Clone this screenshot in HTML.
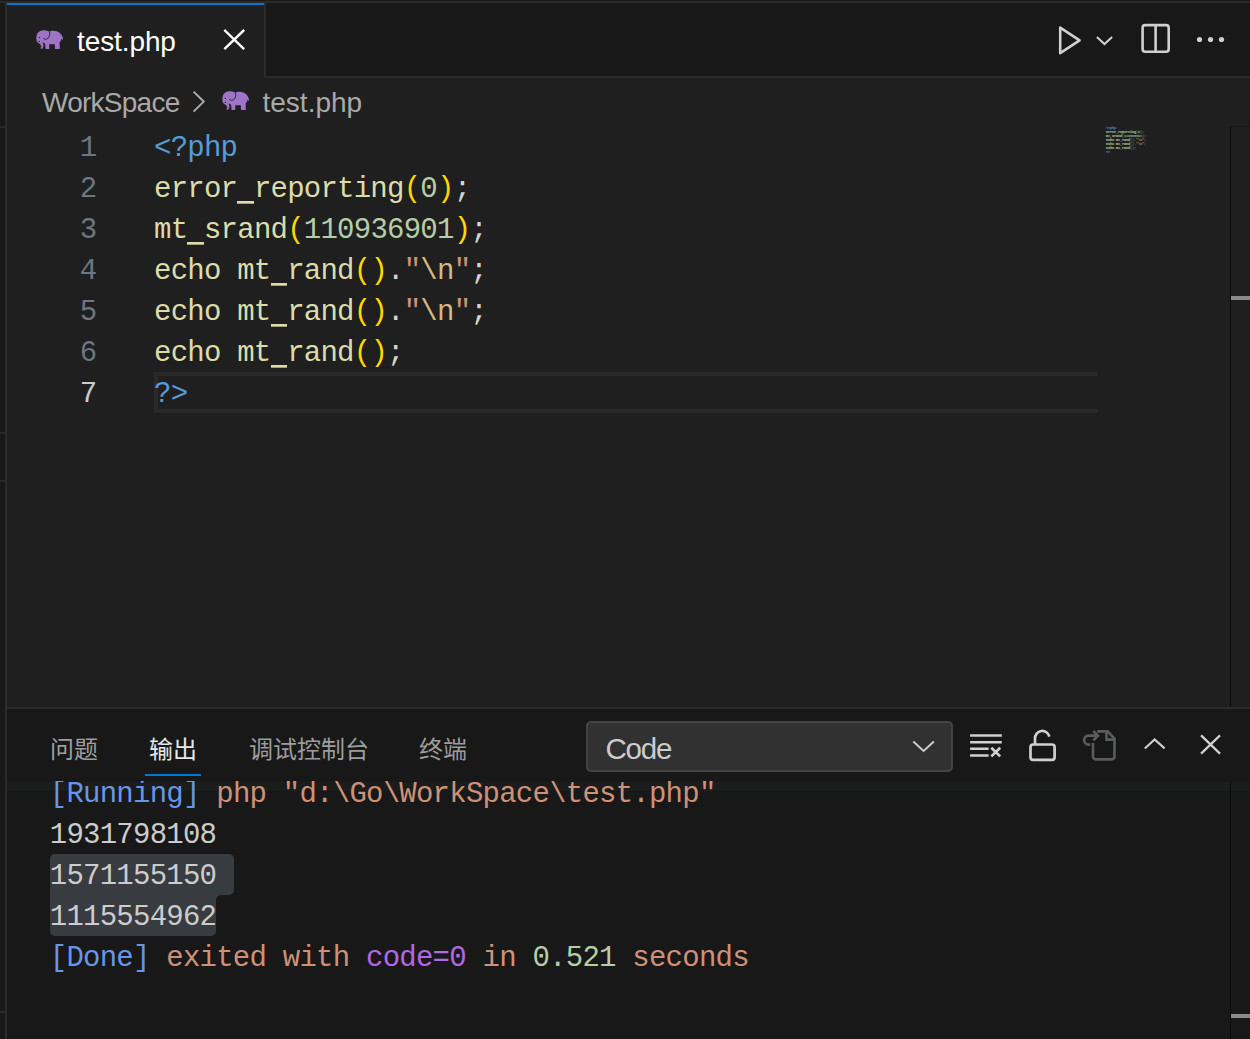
<!DOCTYPE html>
<html>
<head>
<meta charset="utf-8">
<title>test.php</title>
<style>
*{box-sizing:border-box;margin:0;padding:0}
html,body{width:1250px;height:1039px;overflow:hidden;background:#1f1f1f}
body{position:relative;font-family:"Liberation Sans",sans-serif;color:#ccc}
.abs{position:absolute}
.ln{background:#2b2b2b;position:absolute}
.cjk{position:absolute;overflow:visible}
.cjk text{font-family:"Liberation Sans","Noto Sans CJK SC",sans-serif;font-size:24px}
svg{display:block}
/* chrome */
#topdark{left:0;top:0;width:1250px;height:1px;background:#181a1a}
#topline{left:0;top:1px;width:1250px;height:2px}
#leftstrip{left:0;top:3px;width:5px;height:1036px;background:#181818}
#leftborder{left:5px;top:3px;width:2px;height:1036px}
#tabbar{left:7px;top:3px;width:1243px;height:73px;background:#181818}
#tabbarline{left:7px;top:76px;width:1243px;height:2px}
#tab{left:7px;top:3px;width:257px;height:75px;background:#1f1f1f}
#tabblue{left:7px;top:3px;width:257px;height:2px;background:#0078d4}
#tabright{left:264px;top:3px;width:2px;height:73px}
.ui{position:absolute;white-space:nowrap;font-family:"Liberation Sans",sans-serif}
#tabtitle{left:77px;top:24px;font-size:28px;line-height:36px;color:#fff;letter-spacing:-0.1px}
#bc1{left:42px;top:85px;font-size:28px;line-height:36px;color:#a9a9a9;letter-spacing:-0.75px}
#bc2{left:262.5px;top:85px;font-size:28px;line-height:36px;color:#a9a9a9;letter-spacing:0}
/* editor */
.mono{font-family:"Liberation Mono",monospace;font-size:29px;letter-spacing:-0.76px;line-height:41px;margin-top:2px;white-space:pre;position:absolute}
.num{left:40px;width:56.5px;text-align:right;color:#6e7681}
.code{left:154px;color:#d4d4d4}
.mc{left:0;color:#777;font-weight:bold;margin-top:0;-webkit-text-stroke:1.6px currentColor}
.mc .p{color:#6a6a5a}.mc .s{color:#c89858}.mc .q{color:#c08050}.mc .f{color:#e0e0ae}.mc .n{color:#a8d0a0}.mc .b{color:#5a9fe0}
.us{font-style:normal;color:transparent;background:linear-gradient(#dcdcaa,#dcdcaa) no-repeat 0 28px/100% 2.7px}
.b{color:#569cd6}.f{color:#dcdcaa}.p{color:#ffd700}.n{color:#b5cea8}.s{color:#d7ba7d}.q{color:#ce9178}
#curline{left:154px;top:372px;width:944px;height:41px;border:4px solid #292929;border-right:0}
/* panel */
#panelbg{left:7px;top:709px;width:1243px;height:330px;background:#181818}
#panelline{left:7px;top:707px;width:1243px;height:2px}
#tabul{left:145px;top:774px;width:56px;height:2px;background:#0078d4}
#dd{left:586px;top:721px;width:367px;height:51px;background:#313131;border:2px solid #444;border-radius:5px}
#ddtext{left:605.5px;top:731px;font-size:29.5px;line-height:36px;color:#ccc;letter-spacing:-1.2px}
#out{left:7px;top:781px;width:1223px;height:258px;overflow:hidden}
.o{left:42.8px;color:#ccc}
.ob{color:#6796e6}.oo{color:#ce9178}.op{color:#b267e6}.og{color:#b5cea8}
.sel{position:absolute;background:#383b40}
</style>
</head>
<body>
<div id="topdark" class="abs"></div>
<div id="topline" class="ln"></div>
<div id="leftstrip" class="abs"></div>
<div id="leftborder" class="ln"></div>
<div class="ln" style="left:0;top:126px;width:5px;height:2px"></div>
<div class="ln" style="left:0;top:432px;width:5px;height:2px"></div>
<div class="ln" style="left:0;top:480px;width:5px;height:2px"></div>
<div class="ln" style="left:0;top:1011px;width:5px;height:2px"></div>

<div id="tabbar" class="abs"></div>
<div id="tabbarline" class="ln"></div>
<div id="tab" class="abs"></div>
<div id="tabblue" class="abs"></div>
<div id="tabright" class="ln"></div>
<div id="tabtitle" class="ui">test.php</div>
<div id="bc1" class="ui">WorkSpace</div>
<div id="bc2" class="ui">test.php</div>

<svg class="abs" style="left:30px;top:20px" width="40" height="40" viewBox="0 0 40 40"><g fill="#a074c4"><path d="M19.3,11.6 C21,10.6 25,10.5 27.5,11.5 C30.5,12.8 32.5,15.5 33.1,18.8 L32.7,20.1 L31.6,18.6 C31.3,20.5 30.3,21.8 29.6,22.4 L29.8,28.9 L25,28.9 L24.8,24.2 L19.3,24.2 L19.2,28.9 L15.5,28.9 L15.2,24 C14.5,23 13.5,22.6 12.2,22.4 C13.3,23.5 13.8,25 13.4,26.6 C13,28 12,28.9 11.3,28.9 L10.2,27.8 C11.2,27.4 11.6,26.6 11.4,25.8 L10.6,26 C10.9,25 10.5,24.4 9.6,23.8 C8.2,23 7.2,22.4 6.8,21.6 C6,19.5 6.2,15.5 7.5,13.3 C9,10.8 12,9.9 14.5,10.2 C16.5,10.4 18.3,10.9 19.3,11.6 Z"/></g><path d="M19.3,11.4 C20.3,14 19.7,16.8 17.9,18.4 C16.4,19.6 14.4,19.5 13.3,18.3" fill="none" stroke="#1f1f1f" stroke-width="0.9"/><circle cx="9.4" cy="17.4" r="0.65" fill="#1f1f1f"/><path d="M8.2,21.7 L9.9,20.4 L9.9,21.9 Z" fill="#1f1f1f"/></svg>
<svg class="abs" style="left:216.1px;top:81px" width="40" height="40" viewBox="0 0 40 40"><g fill="#a074c4"><path d="M19.3,11.6 C21,10.6 25,10.5 27.5,11.5 C30.5,12.8 32.5,15.5 33.1,18.8 L32.7,20.1 L31.6,18.6 C31.3,20.5 30.3,21.8 29.6,22.4 L29.8,28.9 L25,28.9 L24.8,24.2 L19.3,24.2 L19.2,28.9 L15.5,28.9 L15.2,24 C14.5,23 13.5,22.6 12.2,22.4 C13.3,23.5 13.8,25 13.4,26.6 C13,28 12,28.9 11.3,28.9 L10.2,27.8 C11.2,27.4 11.6,26.6 11.4,25.8 L10.6,26 C10.9,25 10.5,24.4 9.6,23.8 C8.2,23 7.2,22.4 6.8,21.6 C6,19.5 6.2,15.5 7.5,13.3 C9,10.8 12,9.9 14.5,10.2 C16.5,10.4 18.3,10.9 19.3,11.6 Z"/></g><path d="M19.3,11.4 C20.3,14 19.7,16.8 17.9,18.4 C16.4,19.6 14.4,19.5 13.3,18.3" fill="none" stroke="#1f1f1f" stroke-width="0.9"/><circle cx="9.4" cy="17.4" r="0.65" fill="#1f1f1f"/><path d="M8.2,21.7 L9.9,20.4 L9.9,21.9 Z" fill="#1f1f1f"/></svg>
<svg class="abs" style="left:0;top:0" width="1250" height="130" viewBox="0 0 1250 130" fill="none">
<g stroke="#fff" stroke-width="2.4" stroke-linecap="square"><path d="M225.2,30.8 L243.3,48.3 M243.3,30.8 L225.2,48.3"/></g>
<path d="M193.6,91.6 L203.7,101.6 L193.6,111.6" stroke="#a9a9a9" stroke-width="2"/>
<g stroke="#d0d0d0">
<path d="M1060.2,27.6 L1079.6,40.4 L1060.2,53.2 Z" stroke-width="2.6" stroke-linejoin="round"/>
<path d="M1096.9,36.9 L1104.5,44.1 L1112.1,36.9" stroke-width="2"/>
<rect x="1142.6" y="25.1" width="26.1" height="26.6" rx="2.6" stroke-width="2.6"/>
<path d="M1155.6,25 V52" stroke-width="2.6"/>
</g>
<g fill="#d0d0d0"><circle cx="1199.5" cy="39.5" r="2.6"/><circle cx="1210.5" cy="39.5" r="2.6"/><circle cx="1221.5" cy="39.5" r="2.6"/></g>
</svg>


<!-- editor -->
<div class="mono num" style="top:126px">1</div>
<div class="mono num" style="top:167px">2</div>
<div class="mono num" style="top:208px">3</div>
<div class="mono num" style="top:249px">4</div>
<div class="mono num" style="top:290px">5</div>
<div class="mono num" style="top:331px">6</div>
<div class="mono num" style="top:372px;color:#ccc">7</div>
<div id="curline" class="abs"></div>
<div class="mono code" style="top:126px"><span class="b">&lt;?php</span></div>
<div class="mono code" style="top:167px"><span class="f">error<i class="us">_</i>reporting</span><span class="p">(</span><span class="n">0</span><span class="p">)</span>;</div>
<div class="mono code" style="top:208px"><span class="f">mt<i class="us">_</i>srand</span><span class="p">(</span><span class="n">110936901</span><span class="p">)</span>;</div>
<div class="mono code" style="top:249px"><span class="f">echo mt<i class="us">_</i>rand</span><span class="p">()</span>.<span class="q">"</span><span class="s">\n</span><span class="q">"</span>;</div>
<div class="mono code" style="top:290px"><span class="f">echo mt<i class="us">_</i>rand</span><span class="p">()</span>.<span class="q">"</span><span class="s">\n</span><span class="q">"</span>;</div>
<div class="mono code" style="top:331px"><span class="f">echo mt<i class="us">_</i>rand</span><span class="p">()</span>;</div>
<div class="mono code" style="top:372px"><span class="b">?&gt;</span></div>
<div id="mm" class="abs" style="left:1105.6px;top:126px;width:400px;height:287px;transform-origin:0 0;transform:scale(0.1204,0.0976);opacity:.66">
<div class="mono mc" style="top:0"><span class="b">&lt;?php</span></div>
<div class="mono mc" style="top:41px"><span class="f">error<i class="us">_</i>reporting</span><span class="p">(</span><span class="n">0</span><span class="p">)</span>;</div>
<div class="mono mc" style="top:82px"><span class="f">mt<i class="us">_</i>srand</span><span class="p">(</span><span class="n">110936901</span><span class="p">)</span>;</div>
<div class="mono mc" style="top:123px"><span class="f">echo mt<i class="us">_</i>rand</span><span class="p">()</span>.<span class="q">"</span><span class="s">\n</span><span class="q">"</span>;</div>
<div class="mono mc" style="top:164px"><span class="f">echo mt<i class="us">_</i>rand</span><span class="p">()</span>.<span class="q">"</span><span class="s">\n</span><span class="q">"</span>;</div>
<div class="mono mc" style="top:205px"><span class="f">echo mt<i class="us">_</i>rand</span><span class="p">()</span>;</div>
<div class="mono mc" style="top:246px"><span class="b">?&gt;</span></div>
</div>

<!-- panel -->
<div id="panelbg" class="abs"></div>
<div id="panelline" class="ln"></div>
<svg class="cjk" style="left:49.5px;top:735.6px" width="48" height="30.24"><text x="0" y="22.2" fill="#9d9d9d">问题</text></svg>
<svg class="cjk" style="left:149px;top:735.6px" width="48" height="30.24"><text x="0" y="22.2" fill="#e7e7e7">输出</text></svg>
<svg class="cjk" style="left:248.5px;top:735.6px" width="120" height="30.24"><text x="0" y="22.2" fill="#9d9d9d">调试控制台</text></svg>
<svg class="cjk" style="left:418.5px;top:735.6px" width="48" height="30.24"><text x="0" y="22.2" fill="#9d9d9d">终端</text></svg>
<div id="tabul" class="abs"></div>
<div id="dd" class="abs"></div>
<div id="ddtext" class="ui">Code</div>

<svg class="abs" style="left:0;top:709px" width="1250" height="73" viewBox="0 709 1250 73" fill="none">
<path d="M913.3,741.6 L923.6,751 L933.9,741.6" stroke="#ccc" stroke-width="2"/>
<g stroke="#d0d0d0" stroke-width="2.5">
<path d="M970.1,735.6 H1001.8 M970.1,742.2 H1001.8 M970.1,748.8 H988.6 M970.1,755.4 H988.6"/>
<path d="M991.3,747.8 L1000.2,756.4 M1000.2,747.8 L991.3,756.4" stroke-width="2.7"/>
</g>
<g stroke="#d0d0d0" stroke-width="2.7">
<rect x="1030.5" y="744.5" width="24.1" height="15.3" rx="2.6"/>
<path d="M1035,744 V738.6 A7.3,7.3 0 0 1 1049.4,736.6"/>
</g>
<g stroke="#5a5d5e" stroke-width="2.6">
<path d="M1093,743 V756.4 A3,3 0 0 0 1096,759.4 H1111.5 A3,3 0 0 0 1114.5,756.4 V738.6 L1107.6,731.4 H1097.3"/>
<path d="M1106.5,731.4 V739.6 H1114.5"/>
<path d="M1090.2,744.6 H1088.6 A4.5,4.5 0 0 1 1088.6,735.6 H1097.5"/>
<path d="M1093.3,731 L1098,735.7 L1093.3,740.4"/>
</g>
<path d="M1144.8,748.4 L1154.6,739.4 L1164.6,748.4" stroke="#d0d0d0" stroke-width="2.1"/>
<path d="M1201.9,736.2 L1219.2,752.8 M1219.2,736.2 L1201.9,752.8" stroke="#d0d0d0" stroke-width="2.3" stroke-linecap="square"/>
</svg>

<div class="abs" style="left:7px;top:782px;width:1243px;height:9px;background:#1b1c1c"></div>
<div id="out" class="abs">
<div class="sel" style="left:43px;top:73px;width:184px;height:41px;border-radius:5px 5px 5px 0"></div>
<div class="sel" style="left:43px;top:114px;width:166px;height:41px;border-radius:0 0 5px 5px"></div>
<div class="abs" style="left:209px;top:114px;width:5px;height:5px;background:radial-gradient(circle at 100% 100%,rgba(56,59,64,0) 4.6px,#383b40 5.2px)"></div>
<div class="mono o" style="top:-9px"><span class="ob">[Running]</span><span class="oo"> php "d:\Go\WorkSpace\test.php"</span></div>
<div class="mono o" style="top:32px">1931798108</div>
<div class="mono o" style="top:73px">1571155150</div>
<div class="mono o" style="top:114px">1115554962</div>
<div class="mono o" style="top:155px"><span class="ob">[Done]</span><span class="oo"> exited with </span><span class="op">code=0</span><span class="oo"> in </span><span class="og">0.521</span><span class="oo"> seconds</span></div>
</div>

<div class="abs" style="left:1230px;top:126px;width:1px;height:581px;background:#06090d"></div>
<div class="abs" style="left:1231px;top:126px;width:19px;height:1px;background:repeating-linear-gradient(90deg,#1f1f1f 0,#1f1f1f 1px,#06090d 1px,#06090d 2px)"></div>
<div class="abs" style="left:1231px;top:296px;width:19px;height:4px;background:#8a8a8a"></div>
<div class="abs" style="left:1230px;top:782px;width:1px;height:257px;background:#06090d"></div>
<div class="abs" style="left:1231px;top:1014px;width:19px;height:4px;background:#8a8a8a"></div>

</body>
</html>
